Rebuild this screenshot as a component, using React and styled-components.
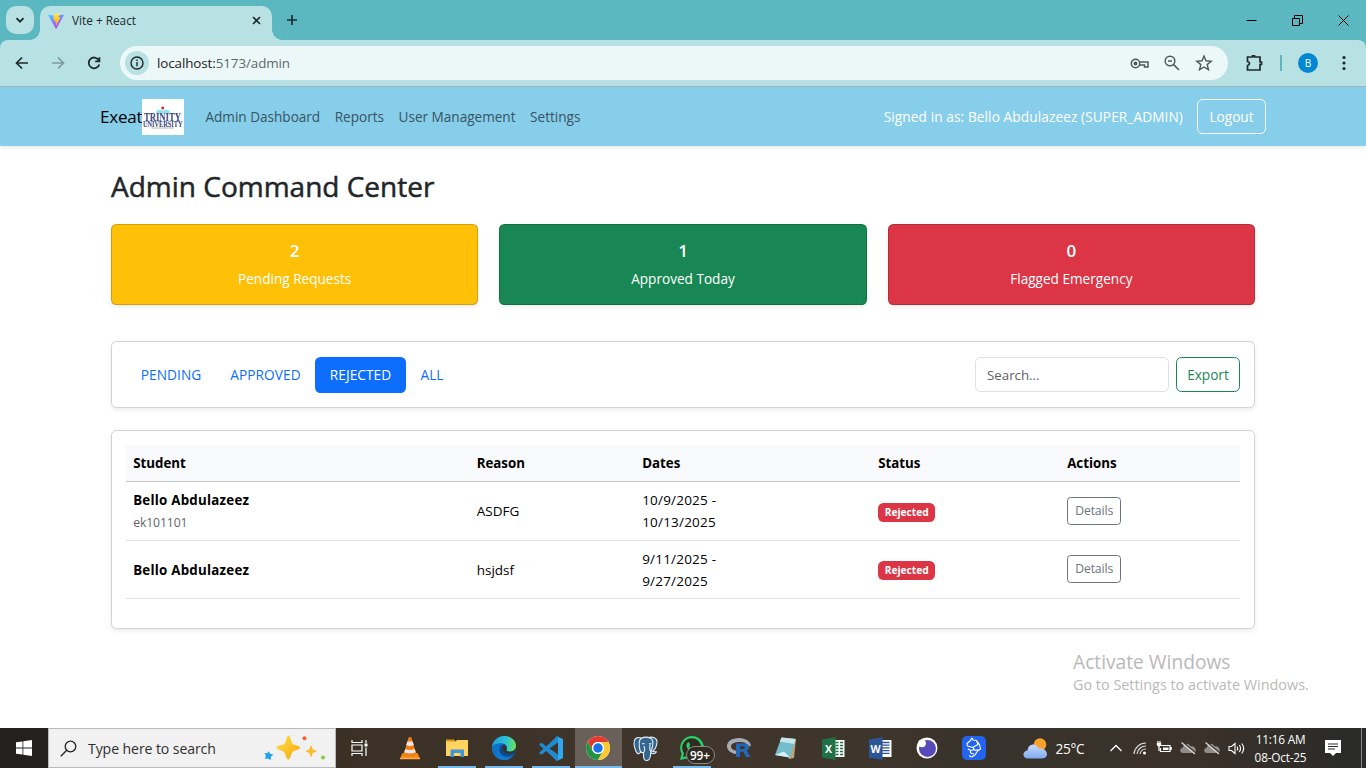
import React from 'react';
import styled, { createGlobalStyle, css } from 'styled-components';

const Global = createGlobalStyle`
  * { box-sizing: border-box; }
  html, body { margin: 0; padding: 0; }
  body { font-family: 'Open Sans', 'Noto Sans', sans-serif; background: #fff; overflow: hidden; }
  button, input { font-family: inherit; margin: 0; }
  svg { display: block; flex: none; overflow: visible; }
`;

const Screen = styled.div`
  position: relative;
  width: 1366px;
  height: 768px;
  display: flex;
  flex-direction: column;
  overflow: hidden;
`;

/* ---------- browser frame ---------- */
const TabStrip = styled.div`
  height: 40px;
  flex: none;
  background: #5bb8c1;
  display: flex;
  align-items: center;
  padding-left: 6px;
`;
const TabSearch = styled.div`
  width: 28px;
  height: 28px;
  border-radius: 10px;
  background: #b8e1e4;
  display: grid;
  place-items: center;
`;
const Tab = styled.div`
  position: relative;
  align-self: flex-end;
  width: 232px;
  height: 34px;
  margin-left: 6px;
  padding: 0 10px 5px 8px;
  background: #b8e1e4;
  border-radius: 10px 10px 0 0;
  display: flex;
  align-items: center;
  gap: 8px;
  &::before, &::after {
    content: '';
    position: absolute;
    bottom: 0;
    width: 10px;
    height: 10px;
  }
  &::before { left: -10px; background: radial-gradient(circle at 0 0, transparent 9.5px, #b8e1e4 10px); }
  &::after { right: -10px; background: radial-gradient(circle at 100% 0, transparent 9.5px, #b8e1e4 10px); }
`;
const TabTitle = styled.span`
  flex: 1;
  font-size: 11.8px;
  line-height: 16px;
  padding-bottom: 1px;
  color: #1d2b2d;
`;
const NewTab = styled.div`
  margin-left: 13px;
`;
const WindowButtons = styled.div`
  margin-left: auto;
  margin-right: -0.5px;
  display: flex;
  align-self: stretch;
`;
const WindowButton = styled.div`
  width: 46px;
  display: grid;
  place-items: center;
`;
const ToolbarBack = styled.div`
  flex: none;
  background: #5bb8c1;
`;
const Toolbar = styled.div`
  height: 47px;
  background: #b8e1e4;
  border-bottom: 1px solid #9fb4b8;
  border-radius: 8px 8px 0 0;
  display: flex;
  align-items: center;
  padding-left: 13px;
`;
const NavIcons = styled.div`
  flex: none;
  display: flex;
  gap: 18px;
  width: 107px;
`;
const Omnibox = styled.div`
  flex: none;
  width: 1108px;
  height: 34px;
  border-radius: 17px;
  background: #ecf8f8;
  display: flex;
  align-items: center;
  padding: 0 15px 0 5px;
`;
const SiteInfo = styled.div`
  width: 24px;
  height: 24px;
  border-radius: 50%;
  background: #b8e1e4;
  display: grid;
  place-items: center;
`;
const Url = styled.div`
  flex: 1;
  margin-left: 8px;
  font-size: 13.4px;
  color: #5d6769;
  letter-spacing: -0.09px;
  b { font-weight: 400; color: #1c2223; }
`;
const OmniIcons = styled.div`
  display: flex;
  align-items: center;
  gap: 15px;
`;
const ToolIcons = styled.div`
  flex: none;
  display: flex;
  align-items: center;
  margin-left: 17px;
`;
const Separator = styled.div`
  width: 2px;
  height: 16px;
  background: #5bb8c1;
  margin: 0 16px 0 17px;
`;
const Avatar = styled.div`
  width: 20px;
  height: 20px;
  border-radius: 50%;
  background: #0288d1;
  color: #fff;
  font-size: 10px;
  display: grid;
  place-items: center;
  margin-right: 24px;
`;

/* ---------- site header ---------- */
const Navbar = styled.header`
  height: 59px;
  flex: none;
  background: #87ceeb;
  box-shadow: 0 2px 4px rgba(0, 0, 0, 0.08);
  display: flex;
  align-items: center;
  padding: 0 100px;
`;
const Brand = styled.div`
  display: flex;
  align-items: center;
  font-size: 17px;
  letter-spacing: -0.2px;
  line-height: 24px;
  color: #000;
  width: 105.5px;
`;
const LogoBox = styled.div`
  width: 42px;
  height: 36px;
  background: #fff;
`;
const NavLinks = styled.nav`
  display: flex;
  gap: 14.6px;
`;
const NavLink = styled.a`
  font-size: 13.6px;
  line-height: 22px;
  letter-spacing: -0.02px;
  padding-top: 1px;
  color: #375460;
`;
const SignedIn = styled.span`
  margin-left: auto;
  margin-right: 14px;
  font-size: 13.7px;
  letter-spacing: 0.08px;
  color: #fff;
`;

const Button = styled.button`
  display: block;
  width: ${(p) => p.$width}px;
  height: ${(p) => (p.$small ? 28 : 35)}px;
  margin-bottom: ${(p) => (p.$small ? 0.4 : 0)}px;
  padding: 0;
  background: transparent;
  border: 1px solid ${(p) => p.$color};
  border-radius: ${(p) => (p.$small ? 3.6 : 5.4)}px;
  color: ${(p) => p.$color};
  font-size: ${(p) => (p.$small ? 12.2 : 13.6)}px;
  letter-spacing: ${(p) => (p.$small ? -0.1 : 0)}px;
  line-height: 20px;
`;

/* ---------- page body ---------- */
const Main = styled.main`
  flex: 1;
  padding: 23px 111px 0;
`;
const Title = styled.h2`
  margin: 0 0 20px;
  font-size: 28px;
  line-height: 35px;
  font-weight: 500;
  -webkit-text-stroke: 0.5px #212529;
  color: #212529;
`;
const Stats = styled.section`
  display: grid;
  grid-template-columns: repeat(3, 1fr);
  gap: 21px;
  margin-bottom: 36px;
`;
const StatCard = styled.div`
  height: 81px;
  background: ${(p) => p.$bg};
  border: 1px solid rgba(0, 0, 0, 0.175);
  border-radius: 5.4px;
  box-shadow: 0 2px 4px rgba(0, 0, 0, 0.08);
  color: #fff;
  text-align: center;
  padding-top: 15px;
`;
const StatValue = styled.div`
  font-size: 17px;
  line-height: 22px;
  font-weight: 600;
  margin-bottom: 6px;
`;
const StatLabel = styled.div`
  font-size: 13.6px;
  line-height: 22px;
`;
const Card = styled.section`
  height: ${(p) => p.$height}px;
  margin-bottom: 22px;
  padding: 14px;
  border: 1px solid #d3d3d4;
  border-radius: 5.4px;
  box-shadow: 0 2px 4px rgba(0, 0, 0, 0.08);
  background: #fff;
`;
const FilterRow = styled.div`
  display: flex;
  align-items: center;
  justify-content: space-between;
  height: 37px;
`;
const Pills = styled.div`
  display: flex;
`;
const Pill = styled.a`
  width: ${(p) => p.$width}px;
  height: 36px;
  line-height: 36px;
  text-align: center;
  font-size: 13.7px;
  letter-spacing: 0.05px;
  border-radius: 5.4px;
  color: #0d6efd;
  ${(p) => p.$active && css`background: #0d6efd; color: #fff;`}
`;
const SearchGroup = styled.div`
  display: flex;
  gap: 7px;
`;
const SearchInput = styled.input`
  width: 194px;
  height: 35px;
  padding: 0 11px;
  border: 1px solid #dee2e6;
  border-radius: 5.4px;
  font-size: 13.3px;
  outline: none;
  &::placeholder { color: #5c6166; opacity: 1; }
`;
const Table = styled.div`
  color: #000;
  font-size: 13.5px;
  line-height: 21.6px;
`;
const Row = styled.div`
  display: grid;
  grid-template-columns: 343.5px 165.5px 236px 189px 1fr;
  align-items: center;
  height: ${(p) => p.$height}px;
  border-bottom: 1px solid #dee2e6;
  ${(p) => p.$head && css`
    background: #f8f9fa;
    border-bottom-color: #c6c7c8;
    font-weight: 700;
    font-size: 13.3px;
  `}
`;
const Cell = styled.div`
  padding: ${(p) => (p.$control ? 0 : 2)}px 7.2px 0;
`;
const DateRange = styled.div`
  width: 90px;
  letter-spacing: 0.2px;
`;
const Name = styled.div`
  font-weight: 700;
  font-size: 13.3px;
  letter-spacing: 0.25px;
`;
const StudentId = styled.div`
  font-size: 12.2px;
  letter-spacing: -0.1px;
  color: #5f656a;
`;
const Badge = styled.span`
  display: block;
  width: 57px;
  height: 19px;
  margin-top: 2px;
  border-radius: 5.4px;
  background: #dc3545;
  color: #fff;
  font-size: 10.2px;
  font-weight: 700;
  line-height: 18px;
  text-align: center;
`;
const Watermark = styled.div`
  position: absolute;
  left: 1073px;
  top: 649px;
  color: #b9b9b9;
  font-size: 14.4px;
  line-height: 20px;
`;
const WatermarkTitle = styled.div`
  font-size: 19.2px;
  line-height: 26px;
`;

/* ---------- desktop task bar ---------- */
const Taskbar = styled.footer`
  height: 40px;
  flex: none;
  background: linear-gradient(90deg, #222120 0, #222120 48px, #3a3025 340px, #40362b 700px, #3d342b 900px, #37322c 1000px, #3a3129 1200px, #2d2c29 1320px, #292a29);
  color: #fff;
  display: flex;
  align-items: stretch;
  & > * { flex: none; }
`;
const StartButton = styled.div`
  width: 48px;
  display: grid;
  place-items: center;
`;
const TaskSearch = styled.div`
  width: 288px;
  border: 1px solid #b9b9b9;
  background: #f1f1f1;
  display: flex;
  align-items: center;
  padding: 0 9px 0 11px;
  gap: 11px;
  color: #2f2f2f;
  font-size: 14.1px;
  span { flex: 1; letter-spacing: -0.1px; }
`;
const Apps = styled.div`
  display: flex;
  margin-left: 3.5px;
`;
const AppSlot = styled.div`
  width: 47px;
  display: grid;
  place-items: center;
  position: relative;
  background: ${(p) => (p.$active ? '#686059' : 'transparent')};
  &::after {
    content: '';
    position: absolute;
    bottom: 0;
    left: ${(p) => (p.$active ? 0 : 4)}px;
    right: ${(p) => (p.$active ? 0 : 5)}px;
    height: 2px;
    background: ${(p) => (p.$open || p.$active ? '#76b9ed' : 'transparent')};
  }
`;
const CountBadge = styled.div`
  position: absolute;
  left: 17px;
  top: 18px;
  width: 29px;
  height: 18px;
  border: 1px solid #8d8983;
  border-radius: 9px;
  background: #302a23;
  font-size: 11.8px;
  font-weight: 600;
  line-height: 16px;
  text-align: center;
`;
const Weather = styled.div`
  display: flex;
  align-items: center;
  gap: 8px;
  margin-left: 25px;
  width: 81.5px;
  font-size: 13.6px;
  letter-spacing: -0.3px;
`;
const Tray = styled.div`
  display: flex;
  align-items: center;
`;
const TrayIcon = styled.div`
  width: 24px;
  display: grid;
  place-items: center;
`;
const Clock = styled.div`
  width: 65px;
  text-align: center;
  font-size: 11.8px;
  letter-spacing: -0.2px;
  line-height: 18px;
  padding-top: 2px;
`;
const Notice = styled.div`
  width: 40px;
  display: grid;
  place-items: center;
`;
const DesktopEdge = styled.div`
  margin-left: auto;
  width: 5px;
  border-left: 1px solid #8a8986;
`;

/* ---------- drawings ---------- */
const Stroke = ({ size = 16, box = 16, w = 1.6, color = '#20292a', children }) => (
  <svg width={size} height={size} viewBox={`0 0 ${box} ${box}`} fill="none" stroke={color} strokeWidth={w}>
    {children}
  </svg>
);

const ViteLogo = () => (
  <svg width="16" height="16" viewBox="0 0 32 32">
    <defs>
      <linearGradient id="vp" x1="0" y1="0" x2="0.6" y2="1"><stop stopColor="#41d1ff" /><stop offset="1" stopColor="#bd34fe" /></linearGradient>
      <linearGradient id="vy" x1="0" y1="0" x2="0" y2="1"><stop stopColor="#ffea83" /><stop offset="0.2" stopColor="#ffdd35" /><stop offset="1" stopColor="#ffa800" /></linearGradient>
    </defs>
    <path d="M31.4 4.9 17 30.8a1 1 0 0 1-1.7 0L.6 4.900C.2 4.100.8 3.200 1.700 3.400L16 6l14.300-2.600c.9-.2 1.500.7 1.100 1.500z" fill="url(#vp)" />
    <path d="M22.500.500 11.900 2.600a.5.5 0 0 0-.4.4l-.7 11.100c0 .3.2.5.5.4l3-.7c.3 0 .5.2.5.5l-.9 4.300c-.1.300.200.600.5.500l1.800-.6c.3 0 .6.200.5.500l-1.400 6.800c-.1.400.500.700.7.300l.2-.2 8.700-17.300c.1-.3-.1-.6-.4-.5l-3 .6c-.3 0-.500-.200-.500-.5L23 1c.1-.300-.200-.500-.5-.5z" fill="url(#vy)" />
  </svg>
);

const UniText = styled.text`
  font-family: 'Liberation Serif', serif;
  font-weight: 700;
  letter-spacing: 0;
  fill: #35457e;
`;
const TrinityLogo = () => (
  <svg width="42" height="36" viewBox="0 0 42 36">
    <path d="M14.500 14V11.500q3.500-1.500 6.500.2 3-1.700 6.500-.2V14z" fill="#86e7ef" />
    <circle cx="20.700" cy="9" r="1.500" fill="#e02b2b" />
    <g transform="translate(2 22) scale(0.730 1)"><UniText fontSize="11.800">TRINITY</UniText></g>
    <g transform="translate(1 27.500) scale(0.840 1)"><UniText fontSize="7.500">UNIVERSITY</UniText></g>
    <path d="M9.500 29h22" stroke="#a9a98a" strokeWidth="1.200" strokeDasharray="2 .5" />
  </svg>
);

const WindowsLogo = () => (
  <svg width="16" height="16" viewBox="0 0 16 16" fill="#fff">
    <path d="M0 2.300 6.500 1.400v6.200H0zM7.300 1.300 16 0v7.600H7.300zM0 8.400h6.500v6.200L0 13.700zM7.300 8.400H16V16l-8.700-1.300z" />
  </svg>
);
const Sparkles = () => (
  <svg width="62" height="26" viewBox="0 0 62 26">
    <defs><linearGradient id="sp" x1="0" y1="0" x2="1" y2="1"><stop stopColor="#ffe04a" /><stop offset="1" stopColor="#f6a609" /></linearGradient></defs>
    <path d="M24.500 1c1.600 0 2.100 7 3.600 8.500S35 11 35.500 12.500 29.500 15 28 16.500 26 24 24.300 24 22 18 20.500 16.500 13 14.500 13 12.500 19.500 11 21 9.500 23 1 24.500 1z" fill="url(#sp)" stroke="url(#sp)" strokeWidth="1.200" />
    <path d="M47 10.500c.9 0 1.200 3.200 2 4s3.500.8 3.500 1.700-2.900 1-3.700 1.800-1 4-1.800 4-1-3.200-1.800-4-3.500-.9-3.500-1.800 2.700-.9 3.500-1.700.9-4 1.800-4z" fill="#fbbc2a" />
    <path d="M4.500 16l1.800 2.900 3.200.6-2.700 2.200.1 3.200-3-1.500L.8 24l1.200-3L.5 18l3 .2z" fill="#1ba1f2" />
    <circle cx="40.500" cy="3.200" r="2" fill="#f4602c" /><circle cx="59" cy="22.600" r="2" fill="#8cc83c" />
  </svg>
);
const TaskView = () => (
  <svg width="18" height="16" viewBox="0 0 18 16" fill="none" stroke="#fff" strokeWidth="1.200">
    <path d="M1 0v2.500h10V0M1 16v-2.500h10V16M1 5h10v6H1zM15 0v3M15 7.500V16" /><path d="M13.500 3.500h3v3h-3z" fill="#fff" stroke="none" />
  </svg>
);
const Vlc = () => (
  <svg width="22" height="24" viewBox="0 0 22 24">
    <path d="M3.500 17h15l2.500 5.500H1z" fill="#f58a12" /><path d="M9.500 1.500q1.500-1 3 0L17.500 19q-6.500 3-13 0z" fill="#f37b13" />
    <path d="M8.300 5.500h5.400l1.100 3.800q-3.800 1.400-7.600 0zM6.200 13q4.800 1.800 9.600 0l1 3.500q-5.800 2.200-11.600 0z" fill="#e8e8e8" />
    <path d="M1 22.500h20" stroke="#ffab4a" strokeWidth="1.500" />
  </svg>
);
const Folder = () => (
  <svg width="22" height="20" viewBox="0 0 22 20">
    <path d="M0 1.500h8l2 2.500H0z" fill="#d99a1d" /><path d="M0 3.500h9.500l1.500-1.500h11V18H0z" fill="#ffd35e" />
    <path d="M4.500 19v-7.500h13.500V19h-3.500v-4h-6.500v4z" fill="#3f96dc" />
  </svg>
);
const Edge = () => (
  <svg width="24" height="24" viewBox="0 0 24 24">
    <defs>
      <linearGradient id="eg" x1="0" y1="0.200" x2="1" y2="0.300"><stop stopColor="#1b9de2" /><stop offset="0.600" stopColor="#2bc3d2" /><stop offset="1" stopColor="#6ae35a" /></linearGradient>
      <linearGradient id="eb" x1="0" y1="0" x2="1" y2="1"><stop stopColor="#0f6cbd" /><stop offset="1" stopColor="#1380d8" /></linearGradient>
    </defs>
    <circle cx="12" cy="12" r="12" fill="#0f62b3" />
    <path d="M0 12C0 5 5.500 0 12.300 0 19 0 24 4.600 24 9.800c0 3.700-2.800 5.900-5.800 5.900-3.200 0-4.200-1.300-3.900-1.900 1.700-2.300 0-6.400-4.200-6.400C4 7.300.2 9.500 0 12z" fill="url(#eg)" />
    <path d="M7.500 13c-.8 4 2.200 8.300 7 8.600 3.300.3 6.300-.8 8-3.500A12 12 0 0 1 12 24C5.200 24 0 18.500 0 12c.4-2.800 4-4.600 7.600-4.600 3.200 0 4.500 1.200 4.500 1.200S8.200 9.300 7.500 13z" fill="url(#eb)" />
    <path d="M7.500 13C8 10 9.500 8.700 11.800 8.500c2.500.8 3.500 3.300 2.500 5.300-.3.600.7 1.900 3.900 1.900 1.900 0 3.600-.7 4.700-2 .2 1.800.3 3.100-.4 4.400-5.500 3.500-15 3-15-5.100z" fill="#0c4a8c" />
    <path d="M11.900 8.700c2.300 1 3.200 3.300 2.400 5.100-.6 1.400 3.500 3 6.400 1.400 1.200-.5 2.200-1.700 2.800-3L24 13c-1 3.500-4.500 5-7.500 4.700C11 17 9 12 11.900 8.700z" fill="#3a3028" />
  </svg>
);
const VsCode = () => (
  <svg width="25" height="25" viewBox="0 0 100 100">
    <path d="M71 1 29 42 10 27 2 31v6l16 14L2 65v6l8 4 19-15 42 40 5-1V0zM76 26v48L42 50z" fill="#1f8ad2" fillRule="evenodd" />
    <path d="M71 1 96 12v76L71 100l5-4V4z" fill="#2fa8f0" />
  </svg>
);
const Chrome = () => (
  <svg width="24" height="24" viewBox="0 0 48 48">
    <circle cx="24" cy="24" r="24" fill="#fff" />
    <path d="M3.220 12A24 24 0 0 1 44.780 12H24a12 12 0 0 0-10.390 18z" fill="#e33b2e" />
    <path d="M3.220 12A24 24 0 0 0 24 48l10.390-18a12 12 0 0 1-20.780 0z" fill="#229342" />
    <path d="M44.780 12A24 24 0 0 1 24 48l10.390-18A12 12 0 0 0 24 12z" fill="#fcc934" />
    <circle cx="24" cy="24" r="12" fill="#fff" /><circle cx="24" cy="24" r="9.500" fill="#1a73e8" />
  </svg>
);
const Postgres = () => (
  <svg width="25" height="25" viewBox="0 0 25 25" stroke="#e8edf1" strokeWidth="1.100" strokeLinejoin="round">
    <path d="M8 2C3.500.300.500 3 1 8c.4 4 2.500 10 4.500 9.800 1 0 2-1.500 3-2.800z" fill="#336791" />
    <path d="M15 2c4-2 9.500 0 9 4.500-.3 3.500-2.500 7.500-4.500 9l4 .3c-1 1.700-3.500 2.200-5.500 1.500z" fill="#336791" />
    <path d="M8 2.500c3-2 9-2 11 1 1.500 3 .5 8-1 12-.8 3 .3 8.500-4 9-3.800.3-3.500-3.500-3.500-8-2 .5-3-.5-3.500-2C6 10 5.500 4.500 8 2.500z" fill="#336791" />
    <path d="M10.500 16.500c1.500-1 1.300-4 .5-6.500M18 15.500c-2-1-1-4-1-7" fill="none" /><path d="M9 8q1.500-1 2.500 0M16 8q1.200-.8 2 0" fill="none" />
  </svg>
);
const WhatsApp = () => (
  <svg width="24" height="24" viewBox="0 0 24 24">
    <path d="M0 24l1.700-6.200A11.900 11.900 0 1 1 6.400 22.400z" fill="#25d366" /><path d="M3 21l1-3.700A9.500 9.500 0 1 1 7 20z" fill="#302a23" />
    <path d="M8 6.500c.8-.4 1.200 0 1.500.8l.7 1.700-1 1.300c.8 2 2.400 3.200 4.300 4l1.200-1.300 2.300 1.200c.2 1.700-1.300 3-3 2.900C10 16.700 6.700 13 6.500 9.500c0-1.200.6-2.400 1.500-3z" fill="#25d366" />
  </svg>
);
const IconText = styled.text`
  font-family: 'Open Sans', sans-serif;
  font-weight: 700;
`;
const RLogo = () => (
  <svg width="24" height="20" viewBox="0 0 24 20">
    <path d="M12 0C5 0 0 3.600 0 8s3.800 7.300 9 8v-3.200C5.500 12 4 10.500 4 8.500 4 5.500 7.500 4 12.500 4S20 5.500 20 8.200h3.800C24 3.800 19 0 12 0z" fill="#a9abb2" />
    <path d="M9 5.500h8.500c3 0 4.500 1.300 4.500 3.700 0 1.800-1 2.800-2.200 3.200L23.500 19h-4.600l-2.700-5.300H13V19H9zm4 2.800v2.800h3.500c1.700 0 1.700-2.800 0-2.800z" fill="#2168b8" fillRule="evenodd" />
  </svg>
);
const Notepad = () => (
  <svg width="24" height="24" viewBox="0 0 24 24">
    <path d="M7 2l15 1-2 19-5 1z" fill="#b9a37a" /><path d="M7.500 1.500 21.500 3 16 21.500 1 19z" fill="#74bccb" /><path d="M7.500 1.500 21.500 3l-1.400 5-14.300-2.500z" fill="#c5e7ec" /><path d="M1 19l9-3.500L16 21.500z" fill="#d7f0f3" />
  </svg>
);
const Office = ({ letter, dark, sheet }) => (
  <svg width="23" height="23" viewBox="0 0 23 23">
    <path d="M12 3h10.500v17H12z" fill="#fff" />
    {sheet
      ? <path d="M13.500 5.500h3M13.500 8.500h3M13.500 11.500h3M13.500 14.500h3M13.500 17.500h3M18 5.500h3M18 8.500h3M18 11.500h3M18 14.500h3M18 17.500h3" stroke={dark} strokeWidth="1.700" />
      : <path d="M13 5.500h7.500M13 8.200h7.500M13 10.900h7.500M13 13.600h7.500M13 16.300h7.500" stroke={dark} strokeWidth="1.300" />}
    <path d="M0 2.500 13.500 0v23L0 20.500z" fill={dark} />
    <IconText x="6.500" y="15.500" fontSize="10.500" fill="#fff" textAnchor="middle">{letter}</IconText>
  </svg>
);
const Orb = () => (
  <svg width="22" height="22" viewBox="0 0 22 22"><circle cx="11" cy="11" r="10.500" fill="#fff" /><circle cx="11.500" cy="11.500" r="8.500" fill="#574ab8" /><circle cx="6" cy="6.300" r="3.900" fill="#fff" /></svg>
);
const BlueApp = () => (
  <svg width="24" height="24" viewBox="0 0 24 24" fill="none" stroke="#fff" strokeWidth="1.100" strokeLinejoin="round">
    <rect width="24" height="24" rx="5" fill="#2463eb" stroke="none" />
    <path d="M10 2 8 5 5 7.500l.5 2.500 5 1.500 5.500-3-1.500-4L11 4zM14.500 4.500 17.500 8.500l1 4.500-3 2-2.500 4-3.500 2-2.500-1.500M6 13l2.500 1.500 4-1M11 11.500l2 3 3-1M8.500 14.500v2.500l3.500 1" />
  </svg>
);
const WeatherIcon = () => (
  <svg width="25" height="21" viewBox="0 0 25 21">
    <defs><linearGradient id="cl" x1="0" y1="0" x2="0" y2="1"><stop stopColor="#c9dcfb" /><stop offset="1" stopColor="#7ea9ee" /></linearGradient></defs>
    <circle cx="17" cy="6.500" r="6.300" fill="#f6a12c" />
    <path d="M5 20.500C-1 20.500-1 12.800 4.500 12.500 5 5 14 4.500 15.500 10.500c9-1.500 12 10 3.500 10z" fill="url(#cl)" />
  </svg>
);
const CloudOff = () => (
  <svg width="16" height="12" viewBox="0 0 16 12">
    <path d="M3 11C-.8 11-.5 6 2.800 5.800 3.500 1 9 .5 10.500 4.300 14.500 4 16.500 6 15.500 11z" fill="#918e89" />
    <path d="M2.500 0 16 11.200" stroke="#37312a" strokeWidth="1.400" /><path d="M1.500.5 15 12" stroke="#e0dfdd" strokeWidth="1.200" />
  </svg>
);

const apps = [
  { icon: <Vlc /> },
  { icon: <Folder />, open: true },
  { icon: <Edge />, open: true },
  { icon: <VsCode />, open: true },
  { icon: <Chrome />, active: true },
  { icon: <Postgres /> },
  { icon: <WhatsApp />, open: true, count: '99+' },
  { icon: <RLogo /> },
  { icon: <Notepad /> },
  { icon: <Office letter="X" dark="#1f7145" sheet /> },
  { icon: <Office letter="W" dark="#2a5699" /> },
  { icon: <Orb /> },
  { icon: <BlueApp /> },
];

const stats = [
  { value: 2, label: 'Pending Requests', bg: '#ffc107' },
  { value: 1, label: 'Approved Today', bg: '#198754' },
  { value: 0, label: 'Flagged Emergency', bg: '#dc3545' },
];

const requests = [
  { name: 'Bello Abdulazeez', id: 'ek101101', reason: 'ASDFG', dates: '10/9/2025 - 10/13/2025', height: 59 },
  { name: 'Bello Abdulazeez', reason: 'hsjdsf', dates: '9/11/2025 - 9/27/2025', height: 58 },
];

function BrowserFrame() {
  return (
    <>
      <TabStrip>
        <TabSearch><Stroke size={10} box={10} w={1.8}><path d="M1.500 3.200 5 6.700l3.500-3.500" /></Stroke></TabSearch>
        <Tab>
          <ViteLogo />
          <TabTitle>Vite + React</TabTitle>
          <Stroke size={11} box={11} w={1.6}><path d="M2 2l7 7M9 2l-7 7" /></Stroke>
        </Tab>
        <NewTab><Stroke size={14} box={14} w={1.7}><path d="M7 2v10M2 7h10" /></Stroke></NewTab>
        <WindowButtons>
          <WindowButton><Stroke size={11} box={11} w={1} color="#000"><path d="M.5 5.500h10" /></Stroke></WindowButton>
          <WindowButton><Stroke size={11} box={11} w={1} color="#000"><path d="M.5 3.500h7v7h-7zM2.500 3V.500h8v8H8" /></Stroke></WindowButton>
          <WindowButton><Stroke size={11} box={11} w={1} color="#000"><path d="M.5.500l10 10M10.500.500l-10 10" /></Stroke></WindowButton>
        </WindowButtons>
      </TabStrip>
      <ToolbarBack>
        <Toolbar>
          <NavIcons>
            <Stroke size={18} box={18} w={1.7}><path d="M15 9H4M9 3.500 3.500 9 9 14.500" /></Stroke>
            <Stroke size={18} box={18} w={1.7} color="#7d9a9d"><path d="M3 9h11M9 3.500 14.500 9 9 14.500" /></Stroke>
            <Stroke size={18} box={18} w={1.8}><path d="M13.700 6A5.400 5.400 0 1 0 14.300 10.500M14.400 3.200V7.400H10.200" /></Stroke>
          </NavIcons>
          <Omnibox>
            <SiteInfo><Stroke size={14} box={14} w={1.4}><circle cx="7" cy="7" r="6" /><path d="M7 6v4.200M7 3.600v1.500" /></Stroke></SiteInfo>
            <Url><b>localhost:</b>5173/admin</Url>
            <OmniIcons>
              <Stroke size={19} box={19} w={1.5} color="#50595a"><circle cx="5.500" cy="9.500" r="4.200" /><circle cx="5.500" cy="9.500" r="1.200" fill="#50595a" /><path d="M9.500 8H18v5h-3.500v-2H9.500" /></Stroke>
              <Stroke size={16} box={16} w={1.5} color="#50595a"><circle cx="6" cy="6" r="4.800" /><path d="M9.400 9.400 15 15M4 6h4" /></Stroke>
              <Stroke size={18} box={18} w={1.4} color="#50595a"><path d="M9 2l2 4.800 5.200.4-4 3.400 1.300 5.100L9 13l-4.500 2.700 1.300-5.100-4-3.400 5.200-.4z" /></Stroke>
            </OmniIcons>
          </Omnibox>
          <ToolIcons>
            <Stroke size={18} box={18} w={1.7}><path d="M2.500 3H7.500V1.800h2V3H15v5h1.500v2.500H15V16H2.500v-4.500q2-.5 2-2t-2-2z" /></Stroke>
            <Separator />
            <Avatar>B</Avatar>
            <svg width="4" height="16" viewBox="0 0 4 16" fill="#20292a"><circle cx="2" cy="2.500" r="1.600" /><circle cx="2" cy="8" r="1.600" /><circle cx="2" cy="13.500" r="1.600" /></svg>
          </ToolIcons>
        </Toolbar>
      </ToolbarBack>
    </>
  );
}

function DesktopBar() {
  return (
    <Taskbar>
      <StartButton><WindowsLogo /></StartButton>
      <TaskSearch>
        <Stroke size={17} box={17} w={1.3} color="#222"><circle cx="10.500" cy="6.500" r="5.300" /><path d="M6.700 10.300.8 16.200" /></Stroke>
        <span>Type here to search</span>
        <Sparkles />
      </TaskSearch>
      <AppSlot><TaskView /></AppSlot>
      <Apps>
        {apps.map((a, i) => (
          <AppSlot key={i} $open={a.open} $active={a.active}>
            {a.icon}
            {a.count && <CountBadge>{a.count}</CountBadge>}
          </AppSlot>
        ))}
      </Apps>
      <Weather><WeatherIcon />25°C</Weather>
      <Tray>
        <TrayIcon><Stroke size={12} box={12} w={1.3} color="#fff"><path d="M.5 9 6 3.500 11.500 9" /></Stroke></TrayIcon>
        <TrayIcon><Stroke size={14} box={14} w={1.2} color="#ddd"><path d="M1 13A12 12 0 0 1 13 2M4 13A9 9 0 0 1 13 5M7 13A6 6 0 0 1 13 8" /><circle cx="11.500" cy="12" r="1.500" fill="#fff" stroke="none" /></Stroke></TrayIcon>
        <TrayIcon><Stroke size={16} box={16} w={1.2} color="#fff"><path d="M4.500 5.500H14v6H4.500V8M15.200 7v3M2 3V1M4 3V1M3 7v4" /><path d="M7 7.500h5.500v2.500H7zM.800 3h4.400v2L3.500 7h-1L.800 5z" fill="#fff" stroke="none" /></Stroke></TrayIcon>
        <TrayIcon><CloudOff /></TrayIcon>
        <TrayIcon><CloudOff /></TrayIcon>
        <TrayIcon><Stroke size={17} box={17} w={1.1} color="#fff"><path d="M1 6.500h2.500L7 3.500v10L3.500 10.500H1zM9 6.500q1.500 2 0 4M11.300 5q2.500 3.500 0 7M13.700 3.500q4 5 0 10" /></Stroke></TrayIcon>
      </Tray>
      <Clock>11:16 AM<br />08-Oct-25</Clock>
      <Notice>
        <svg width="16" height="16" viewBox="0 0 16 16"><path d="M0 0h16v13h-5l-3 3-3-3H0z" fill="#fff" /><path d="M3 4h10M3 6.500h10M3 9h7" stroke="#2d2c29" strokeWidth="1.100" /></svg>
      </Notice>
      <DesktopEdge />
    </Taskbar>
  );
}

export default function App() {
  return (
    <Screen>
      <Global />
      <BrowserFrame />
      <Navbar>
        <Brand>Exeat<LogoBox><TrinityLogo /></LogoBox></Brand>
        <NavLinks>
          <NavLink>Admin Dashboard</NavLink>
          <NavLink>Reports</NavLink>
          <NavLink>User Management</NavLink>
          <NavLink>Settings</NavLink>
        </NavLinks>
        <SignedIn>Signed in as: Bello Abdulazeez (SUPER_ADMIN)</SignedIn>
        <Button $width={69} $color="#fff">Logout</Button>
      </Navbar>
      <Main>
        <Title>Admin Command Center</Title>
        <Stats>
          {stats.map((s) => (
            <StatCard key={s.label} $bg={s.bg}>
              <StatValue>{s.value}</StatValue>
              <StatLabel>{s.label}</StatLabel>
            </StatCard>
          ))}
        </Stats>
        <Card $height={67}>
          <FilterRow>
            <Pills>
              <Pill $width={90}>PENDING</Pill>
              <Pill $width={99}>APPROVED</Pill>
              <Pill $width={91} $active>REJECTED</Pill>
              <Pill $width={52}>ALL</Pill>
            </Pills>
            <SearchGroup>
              <SearchInput placeholder="Search..." />
              <Button $width={64} $color="#198754">Export</Button>
            </SearchGroup>
          </FilterRow>
        </Card>
        <Card $height={199}>
          <Table>
            <Row $head $height={37}>
              {['Student', 'Reason', 'Dates', 'Status', 'Actions'].map((h) => <Cell key={h}>{h}</Cell>)}
            </Row>
            {requests.map((r) => (
              <Row key={r.reason} $height={r.height}>
                <Cell><Name>{r.name}</Name>{r.id && <StudentId>{r.id}</StudentId>}</Cell>
                <Cell>{r.reason}</Cell>
                <Cell><DateRange>{r.dates}</DateRange></Cell>
                <Cell $control><Badge>Rejected</Badge></Cell>
                <Cell $control><Button $small $width={54} $color="#6c757d">Details</Button></Cell>
              </Row>
            ))}
          </Table>
        </Card>
      </Main>
      <DesktopBar />
      <Watermark>
        <WatermarkTitle>Activate Windows</WatermarkTitle>
        Go to Settings to activate Windows.
      </Watermark>
    </Screen>
  );
}
